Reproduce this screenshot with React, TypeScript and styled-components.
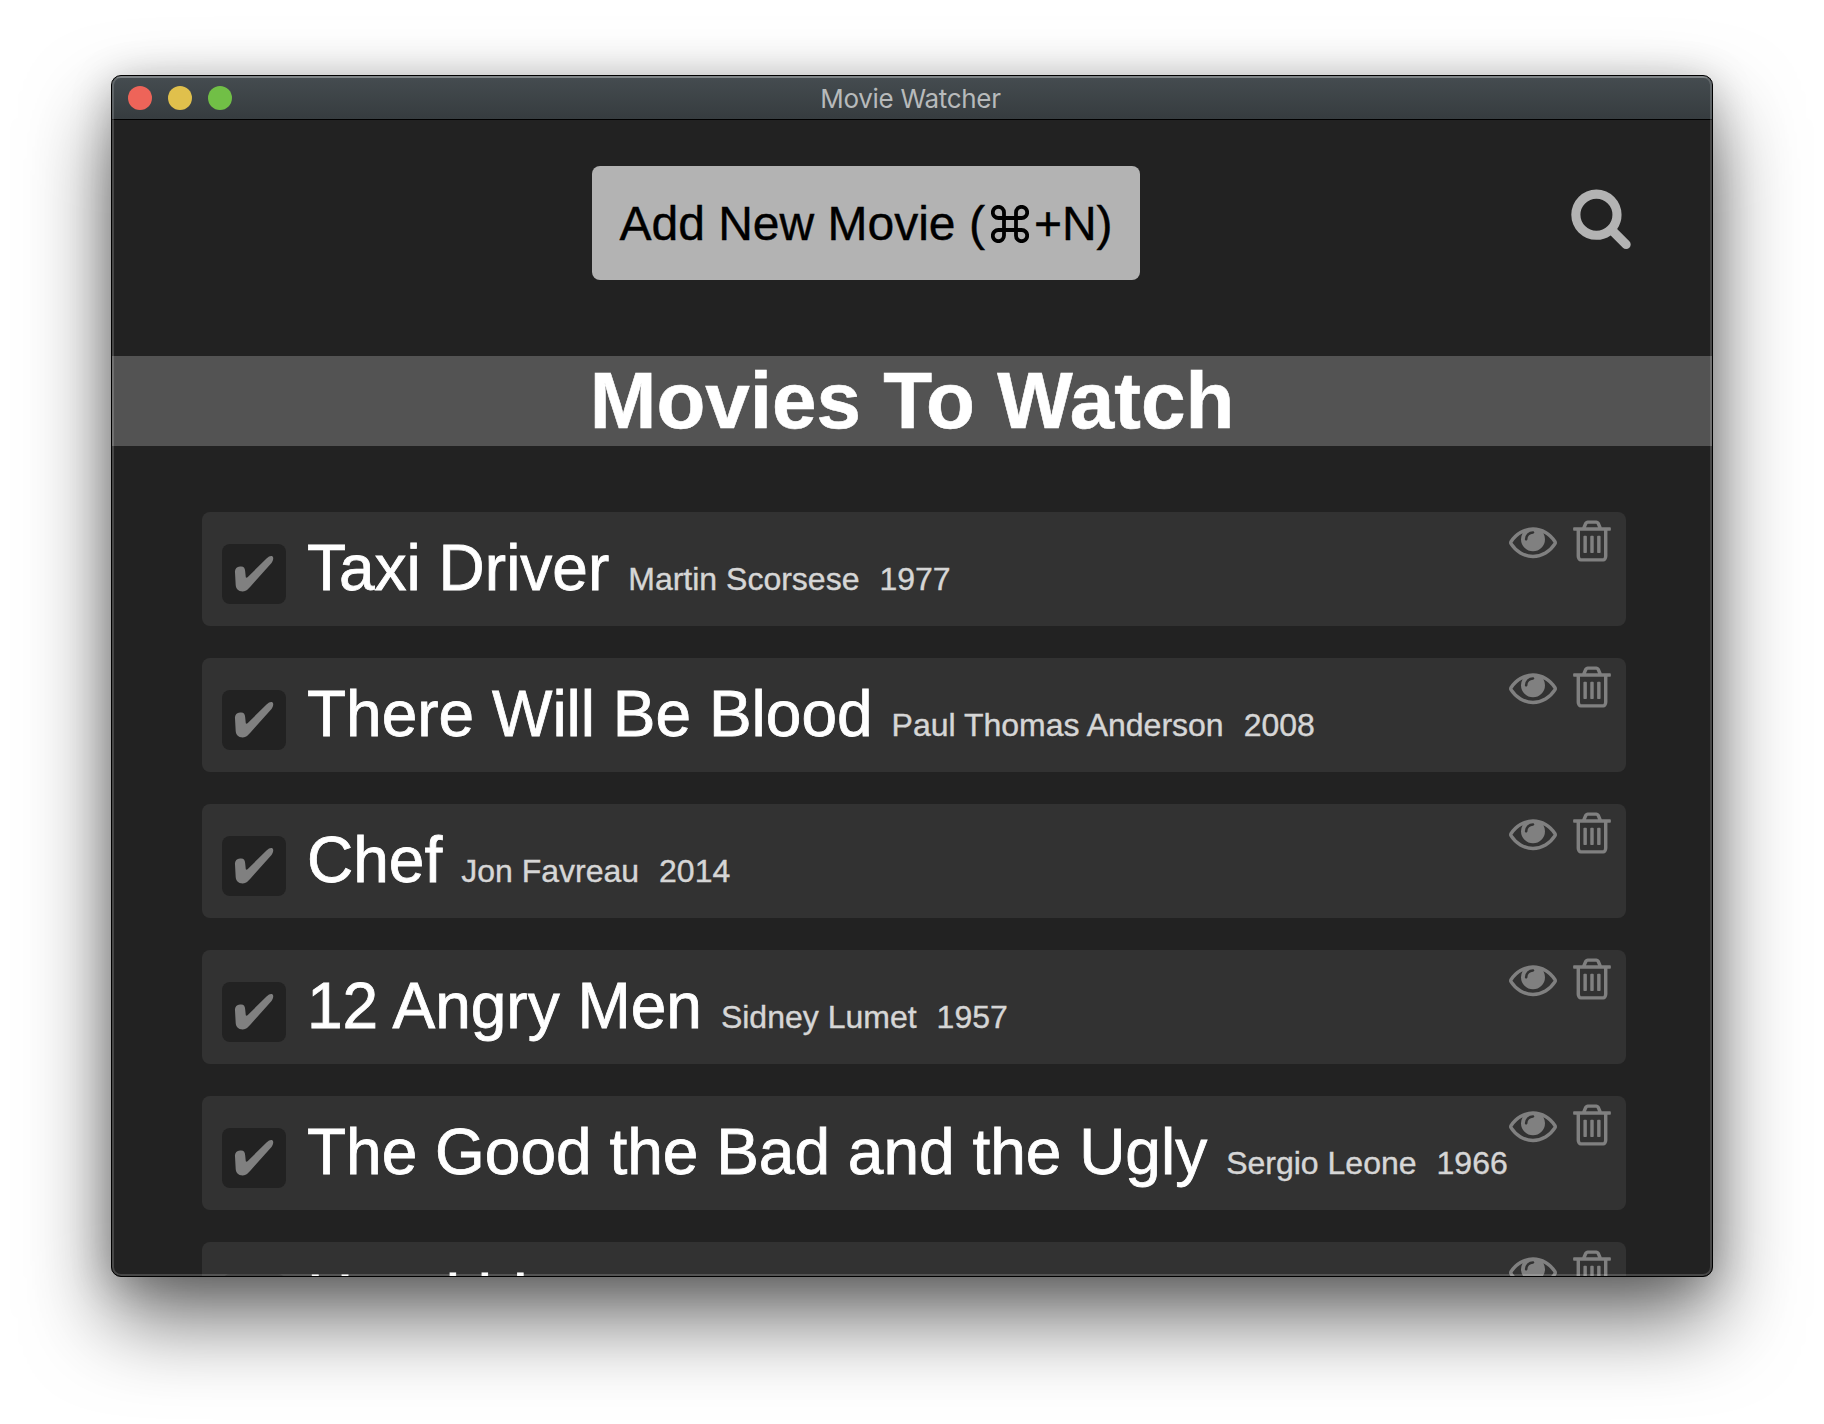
import React from 'react';
import styled, { createGlobalStyle } from 'styled-components';

const Global = createGlobalStyle`
  * { box-sizing: border-box; }
  html, body { margin: 0; background: #fff; overflow: hidden; }
`;

const Desktop = styled.div`
  width: 1824px;
  height: 1424px;
  padding: 75px 111px;
  background: #fff;
  font-family: "Liberation Sans", Arial, sans-serif;
`;

const Window = styled.main`
  position: relative;
  display: flex;
  flex-direction: column;
  width: 1602px;
  height: 1202px;
  border: 1px solid #000;
  border-radius: 10px;
  overflow: hidden;
  background: #222;
  box-shadow: 0 42px 84px rgba(0, 0, 0, 0.58), 0 6px 40px rgba(0, 0, 0, 0.22);

  &::after {
    content: "";
    position: absolute;
    inset: 0;
    border: 2px solid rgba(255, 255, 255, 0.17);
    border-radius: 9px;
    pointer-events: none;
  }
`;

const TitleBar = styled.header`
  display: flex;
  flex: none;
  align-items: center;
  height: 44px;
  padding: 0 16px;
  background: linear-gradient(#454c50, #363c3f);
  border-bottom: 1px solid #000;
  box-shadow: inset 0 2px 0 rgba(255, 255, 255, 0.18);
`;

const Lights = styled.div`
  display: flex;
  flex: 1;
  gap: 16px;
`;

const Light = styled.span<{ $color: string }>`
  width: 24px;
  height: 24px;
  border-radius: 50%;
  background: ${(p) => p.$color};
`;

const WindowTitle = styled.span`
  padding: 2px 3px 0 0;
  color: #b7babb;
  font-family: Inter, sans-serif;
  font-size: 26px;
  letter-spacing: -0.3px;
  line-height: 32px;
`;

const Spacer = styled.div`
  flex: 1;
`;

const Toolbar = styled.section`
  display: flex;
  flex: none;
  justify-content: flex-end;
  align-items: flex-start;
  gap: 428.5px;
  height: 236px;
  padding: 46px 79.5px 0 0;
`;

const AddButton = styled.button`
  display: flex;
  align-items: center;
  justify-content: center;
  width: 548px;
  height: 114px;
  padding: 2px 0 0;
  border: 0;
  border-radius: 8px;
  background: #b3b3b3;
  color: #000;
  font: 48px/56px "Liberation Sans", Arial, sans-serif;
  -webkit-text-stroke: 0.4px #000;
  white-space: pre;
`;

const CommandIcon = styled.svg`
  width: 38px;
  height: 38px;
  margin: 0 5px 0 6px;
  fill: none;
  stroke: #000;
  stroke-width: 3.8;
`;

const SearchIcon = styled.svg`
  width: 64px;
  height: 64px;
  margin-top: 18.8px;
  fill: #b3b3b3;
`;

const Heading = styled.h1`
  flex: none;
  height: 90px;
  margin: 0;
  background: #535353;
  color: #fff;
  font-size: 80px;
  font-weight: 700;
  line-height: 89px;
  text-align: center;
  -webkit-text-stroke: 0.6px #fff;
`;

const List = styled.ul`
  display: flex;
  flex-direction: column;
  gap: 32px;
  margin: 0;
  padding: 66px 86px 0 90px;
  list-style: none;
`;

const Row = styled.li`
  display: flex;
  flex: none;
  height: 114px;
  padding: 0 14px 0 20px;
  border-radius: 8px;
  background: #323232;
`;

const Check = styled.span`
  display: flex;
  flex: none;
  align-items: center;
  justify-content: center;
  width: 64px;
  height: 60px;
  margin: 32px 21px 0 0;
  border-radius: 8px;
  background: #222;
`;

const CheckIcon = styled.svg`
  width: 40px;
  height: 38px;
  margin-bottom: 1px;
  fill: #808080;
`;

const Info = styled.div`
  display: flex;
  flex: 1;
  align-items: baseline;
  padding-top: 19px;
  white-space: nowrap;
`;

const Name = styled.span`
  margin-right: -1px;
  color: #fff;
  font-size: 64px;
  line-height: 74px;
  -webkit-text-stroke: 0.8px #fff;
`;

const Detail = styled.span`
  margin-left: 20px;
  color: #d6d6d6;
  font-size: 32px;
  -webkit-text-stroke: 0.4px #d6d6d6;
`;

const Actions = styled.div`
  display: flex;
  flex: none;
  align-items: flex-start;
  gap: 11px;
  width: 103px;
  padding-top: 5px;
  margin-left: -100px;
`;

const ActionIcon = styled.svg`
  flex: none;
  width: 48px;
  height: 48px;
  fill: #808080;
`;

const SEARCH =
  'M1216 832q0-185-131.5-316.5t-316.5-131.5-316.5 131.5-131.5 316.5 131.5 316.5 316.5 131.5 316.5-131.5 131.5-316.5zm512 832q0 52-38 90t-90 38q-54 0-90-38l-343-342q-179 124-399 124-143 0-273.5-55.5t-225-150-150-225-55.5-273.5 55.5-273.5 150-225 225-150 273.5-55.5 273.5 55.5 225 150 150 225 55.5 273.5q0 220-124 399l343 343q37 37 37 90z';
const EYE =
  'M1664 960q-152-236-381-353 61 104 61 225 0 185-131.5 316.5t-316.5 131.5-316.5-131.5-131.5-316.5q0-121 61-225-229 117-381 353 133 205 333.5 326.5t434.5 121.5 434.5-121.5 333.5-326.5zm-720-384q0-20-14-34t-34-14q-125 0-214.5 89.5t-89.5 214.5q0 20 14 34t34 14 34-14 14-34q0-86 61-147t147-61q20 0 34-14t14-34zm848 384q0 34-20 69-140 230-376.5 368.5t-499.5 138.5-499.5-139-376.5-368q-20-35-20-69t20-69q140-229 376.5-368t499.5-139 499.5 139 376.5 368q20 35 20 69z';
const TRASH =
  'M704 736v576q0 14-9 23t-23 9h-64q-14 0-23-9t-9-23v-576q0-14 9-23t23-9h64q14 0 23 9t9 23zm256 0v576q0 14-9 23t-23 9h-64q-14 0-23-9t-9-23v-576q0-14 9-23t23-9h64q14 0 23 9t9 23zm256 0v576q0 14-9 23t-23 9h-64q-14 0-23-9t-9-23v-576q0-14 9-23t23-9h64q14 0 23 9t9 23zm128 724v-948h-896v948q0 22 7 40.5t14.5 27 10.5 8.5h832q3 0 10.5-8.5t14.5-27 7-40.5zm-672-1076h448l-48-117q-7-9-17-11h-317q-10 2-17 11zm928 32v64q0 14-9 23t-23 9h-96v948q0 83-47 143.5t-113 60.5h-832q-66 0-113-58.5t-47-141.5v-952h-96q-14 0-23-9t-9-23v-64q0-14 9-23t23-9h309l70-167q15-37 54-63t79-26h320q40 0 79 26t54 63l70 167h309q14 0 23 9t9 23z';

interface Movie {
  name: string;
  director?: string;
  year?: number;
}

const movies: Movie[] = [
  { name: 'Taxi Driver', director: 'Martin Scorsese', year: 1977 },
  { name: 'There Will Be Blood', director: 'Paul Thomas Anderson', year: 2008 },
  { name: 'Chef', director: 'Jon Favreau', year: 2014 },
  { name: '12 Angry Men', director: 'Sidney Lumet', year: 1957 },
  { name: 'The Good the Bad and the Ugly', director: 'Sergio Leone', year: 1966 },
  { name: 'Harakiri' },
];

function MovieRow({ movie }: { movie: Movie }) {
  return (
    <Row>
      <Check>
        <CheckIcon viewBox="0 0 40 38">
          <path d="M1 17.500C0.600 14 2.500 12 6 11.500C9.800 11 11 13 11.200 16.500L11.700 21.500C11.800 23 12.800 23 13.800 22L32.500 3.500C35 1 37 0.500 38.300 1.200C39.800 2.200 39.500 5 37.500 8L16.500 31.500C14.300 34 12 36.500 8.800 36.500C4 36.500 1.900 33.500 1.700 30Z" />
        </CheckIcon>
      </Check>
      <Info>
        <Name>{movie.name}</Name>
        {movie.director && <Detail>{movie.director}</Detail>}
        {movie.year && <Detail>{movie.year}</Detail>}
      </Info>
      <Actions>
        <ActionIcon viewBox="0 0 1792 1792"><path d={EYE} /></ActionIcon>
        <ActionIcon viewBox="0 0 1792 1792"><path d={TRASH} /></ActionIcon>
      </Actions>
    </Row>
  );
}

export default function App() {
  return (
    <Desktop>
      <Global />
      <Window>
        <TitleBar>
          <Lights>
            <Light $color="#ee6459" />
            <Light $color="#e0c04c" />
            <Light $color="#71bf46" />
          </Lights>
          <WindowTitle>Movie Watcher</WindowTitle>
          <Spacer />
        </TitleBar>
        <Toolbar>
          <AddButton>
            Add New Movie (
            <CommandIcon viewBox="0 0 38 38">
              <path d="M13 13V7.500A5.600 5.600 0 1 0 7.400 13H30.600A5.600 5.600 0 1 0 25 7.500V30.500A5.600 5.600 0 1 0 30.600 25H7.400A5.600 5.600 0 1 0 13 30.500Z" />
            </CommandIcon>
            +N)
          </AddButton>
          <SearchIcon viewBox="0 0 1792 1792"><path d={SEARCH} /></SearchIcon>
        </Toolbar>
        <Heading>Movies To Watch</Heading>
        <List>
          {movies.map((m) => <MovieRow key={m.name} movie={m} />)}
        </List>
      </Window>
    </Desktop>
  );
}
